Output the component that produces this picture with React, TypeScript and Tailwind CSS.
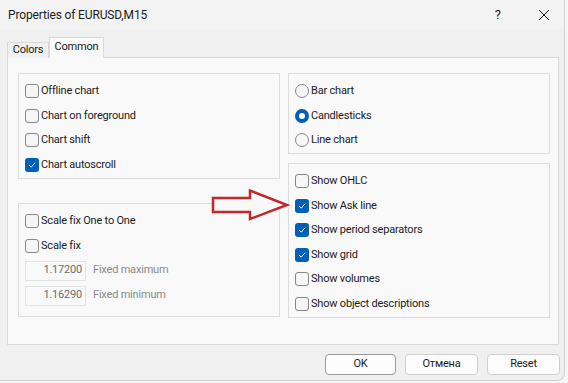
import React from 'react'

const font = { fontFamily: 'Roboto, "Noto Sans", sans-serif' }

// body text: narrow Segoe-like look
const txt = 'text-[11px] tracking-[-0.2px]'

function Check({ checked, label }: { checked?: boolean; label: string }) {
  return (
    <div className="flex h-[24.5px] items-center">
      {checked ? (
        <span className="flex h-[14px] w-[14px] items-center justify-center rounded-[3px] bg-[#005fb8]">
          <svg width="10" height="10" viewBox="0 0 10 10" fill="none">
            <path d="M2.2 5.2 L4.2 7.2 L7.8 3" stroke="#fff" strokeWidth="1" strokeLinecap="round" strokeLinejoin="round" />
          </svg>
        </span>
      ) : (
        <span className="h-[14px] w-[14px] rounded-[3px] border border-[#878787] bg-[#f6f6f6]" />
      )}
      <span className={`ml-[2px] ${txt} text-[#1b1b1b]`}>{label}</span>
    </div>
  )
}

function Radio({ checked, label }: { checked?: boolean; label: string }) {
  return (
    <div className="flex h-[24.5px] items-center">
      {checked ? (
        <span className="flex h-[14px] w-[14px] items-center justify-center rounded-full bg-[#005fb8]">
          <span className="h-[6px] w-[6px] rounded-full bg-white" />
        </span>
      ) : (
        <span className="h-[14px] w-[14px] rounded-full border border-[#878787] bg-[#f6f6f6]" />
      )}
      <span className={`ml-[2px] ${txt} text-[#1b1b1b]`}>{label}</span>
    </div>
  )
}

function Fixed({ value, label }: { value: string; label: string }) {
  return (
    <div className="flex h-[25px] items-center">
      <div className={`flex h-[20px] w-[61px] items-center justify-end border border-[#e3e3e3] bg-[#f9f9f9] pr-[3px] ${txt} text-[#6d6d6d]`}>
        {value}
      </div>
      <span className={`ml-[7px] ${txt} text-[#8a8a8a]`}>{label}</span>
    </div>
  )
}

function Button({ label, primary }: { label: string; primary?: boolean }) {
  return (
    <button
      className={`h-[21px] rounded-[4px] border bg-[#fdfdfd] ${txt} text-[#1b1b1b] ${
        primary ? 'w-[71px] border-[#9a9a9a]' : 'w-[73px] border-[#d0d0d0]'
      }`}
    >
      {label}
    </button>
  )
}

export default function App() {
  return (
    <div className="relative h-[383px] w-[568px] bg-[#f6f6f6]" style={font}>
      <div className="flex h-[381px] w-[565px] flex-col rounded-br-[8px] border-b border-r border-[#cfcfcf] bg-[#f0f0f0]">
        {/* title bar */}
        <div className="flex h-[30px] items-center bg-[#f3f3f3] pl-[8px]">
          <span className="text-[12px] tracking-[-0.15px] text-[#1b1b1b]">Properties of EURUSD,M15</span>
          <span className="ml-auto text-[13px] text-[#1b1b1b]">?</span>
          <svg className="ml-[37px] mr-[14px]" width="12" height="12" viewBox="0 0 12 12">
            <path d="M1 1 L11 11 M11 1 L1 11" stroke="#1b1b1b" strokeWidth="1" />
          </svg>
        </div>

        {/* tabs */}
        <div className="flex h-[27px] items-end pl-[7px]">
          <div className={`relative -mb-px flex h-[16px] w-[42px] items-center justify-center border border-b-0 border-[#d9d9d9] bg-[#f0f0f0] ${txt} text-[#1b1b1b]`}>
            Colors
          </div>
          <div className={`relative z-10 -mb-px flex h-[21px] w-[55px] items-start justify-center border border-b-0 border-[#d9d9d9] bg-[#f9f9f9] pt-[1px] ${txt} text-[#1b1b1b]`}>
            Common
          </div>
        </div>

        {/* page */}
        <div className="ml-[7px] flex h-[288px] w-[552px] gap-[8px] border border-[#d9d9d9] bg-[#f9f9f9] pl-[10px] pt-[15px]">
          <div className="flex w-[262px] flex-col gap-[24px]">
            <div className="h-[106px] border border-[#dcdcdc] px-[6px] pt-[5px]">
              <Check label="Offline chart" />
              <Check label="Chart on foreground" />
              <Check label="Chart shift" />
              <Check checked label="Chart autoscroll" />
            </div>
            <div className="h-[114px] border border-[#dcdcdc] px-[6px] pt-[5px]">
              <Check label="Scale fix One to One" />
              <Check label="Scale fix" />
              <Fixed value="1.17200" label="Fixed maximum" />
              <Fixed value="1.16290" label="Fixed minimum" />
            </div>
          </div>
          <div className="flex w-[262px] flex-col gap-[9px]">
            <div className="h-[81px] border border-[#dcdcdc] px-[6px] pt-[5px]">
              <Radio label="Bar chart" />
              <Radio checked label="Candlesticks" />
              <Radio label="Line chart" />
            </div>
            <div className="h-[155px] border border-[#dcdcdc] px-[6px] pt-[5px]">
              <Check label="Show OHLC" />
              <Check checked label="Show Ask line" />
              <Check checked label="Show period separators" />
              <Check checked label="Show grid" />
              <Check label="Show volumes" />
              <Check label="Show object descriptions" />
            </div>
          </div>
        </div>

        {/* buttons */}
        <div className="mt-[9px] flex justify-end gap-[9px] pr-[4px]">
          <Button primary label="OK" />
          <Button label="Отмена" />
          <Button label="Reset" />
        </div>
      </div>

      {/* red arrow annotation */}
      <svg className="absolute left-[211px] top-[188px]" width="80" height="34" viewBox="0 0 80 34">
        <path
          d="M2 10 L39 10 L39 2.5 L76 17 L39 31 L39 24 L2 24 Z"
          fill="#f9f9f9"
          stroke="#c0282d"
          strokeWidth="2.5"
          strokeLinejoin="miter"
        />
      </svg>
    </div>
  )
}
